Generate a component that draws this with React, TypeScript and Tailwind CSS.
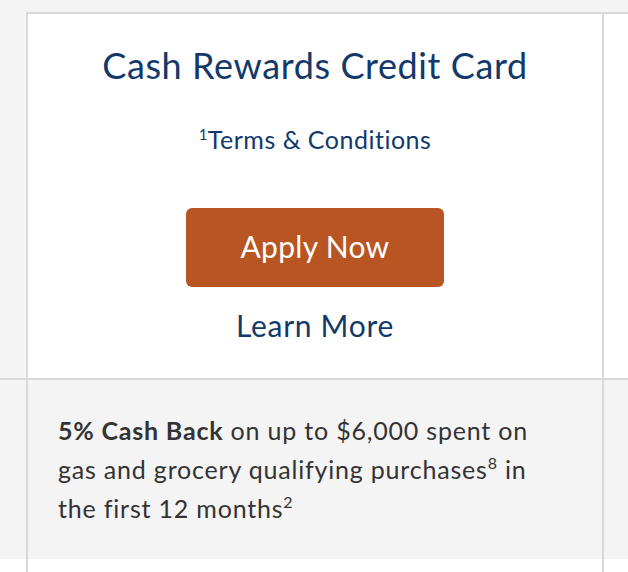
import React from "react";

const font = { fontFamily: "Lato, 'Open Sans', sans-serif" };

export default function App() {
  return (
    <div className="w-[628px] h-[572px] overflow-hidden bg-white flex flex-col" style={font}>
      <div className="h-[12px] bg-[#f4f4f4] shrink-0" />
      {/* Row 1 */}
      <div className="flex h-[366px] shrink-0">
        <div className="w-[26px] bg-[#f4f4f4] shrink-0" />
        <div className="w-[578px] shrink-0 bg-white border-t-2 border-x-2 border-[#d9d9d9] flex flex-col items-center pt-[29px]">
          <h2 className="text-[36px] leading-[44px] text-[#12396a] tracking-[0.6px]">Cash Rewards Credit Card</h2>
          <a className="mt-[37px] text-[25px] leading-[30px] text-[#12396a] tracking-[0.5px]">
            <sup className="text-[15px] top-[-0.6em]">1</sup>Terms &amp; Conditions
          </a>
          <button className="mt-[54px] w-[258px] h-[79px] rounded-[6px] bg-[#b95522] text-white text-[30px] leading-[36px] tracking-[0.3px] pb-[4px] flex items-center justify-center">
            Apply Now
          </button>
          <a className="mt-[20px] text-[30px] leading-[36px] text-[#12396a] tracking-[0.7px]">Learn More</a>
        </div>
        <div className="flex-1 bg-white border-t-2 border-[#d9d9d9]" />
      </div>
      {/* Row 2 */}
      <div className="flex h-[181px] shrink-0 border-t-2 border-[#d9d9d9] bg-[#f4f4f4]">
        <div className="w-[26px] shrink-0" />
        <div className="w-[578px] shrink-0 border-x-2 border-[#d9d9d9] pt-[31px] px-[30px]">
          <p className="text-[25px] leading-[39px] text-[#333333] whitespace-nowrap tracking-[0.8px]">
            <span className="font-bold">5% Cash Back</span> on up to $6,000 spent on
            <br />
            gas and grocery qualifying purchases<sup className="text-[16px] top-[-0.6em]">8</sup> in
            <br />
            the first 12 months<sup className="text-[16px] top-[-0.6em]">2</sup>
          </p>
        </div>
        <div className="flex-1" />
      </div>
      {/* Row 3 */}
      <div className="flex flex-1">
        <div className="w-[26px] shrink-0" />
        <div className="w-[578px] shrink-0 border-x-2 border-[#d9d9d9]" />
        <div className="flex-1" />
      </div>
    </div>
  );
}
